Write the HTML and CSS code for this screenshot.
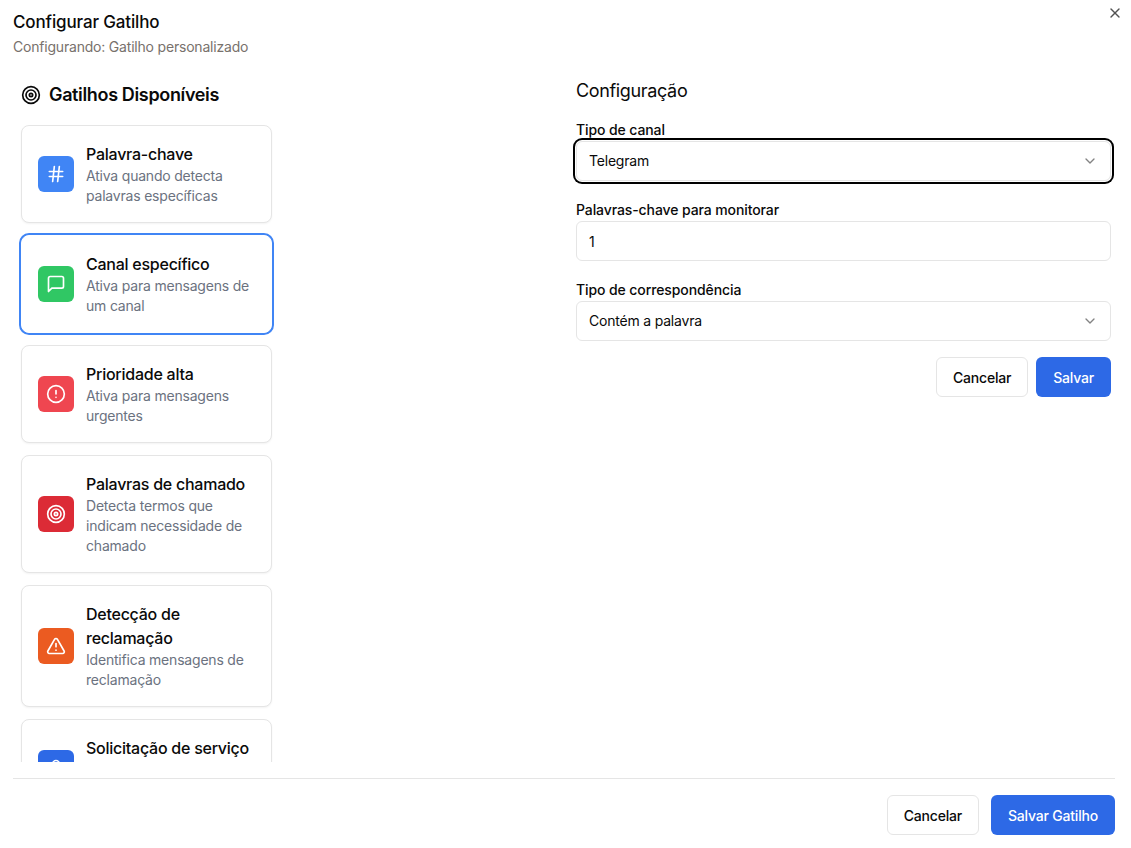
FILE: index.html
```html
<!DOCTYPE html>
<html lang="pt">
<head>
    <meta charset="utf-8">
    <title>Configurar Gatilho</title>
    <link rel="stylesheet" href="styles.css">
</head>
<body>
    <div class="dialog">
        <button class="close-btn" aria-label="Fechar">
            <svg viewBox="0 0 24 24" width="16" height="16" class="line-icon"><path d="M18 6 6 18"/><path d="m6 6 12 12"/></svg>
        </button>

        <header class="dialog-header">
            <h1>Configurar Gatilho</h1>
            <p>Configurando: Gatilho personalizado</p>
        </header>

        <div class="dialog-body">
            <section class="triggers">
                <h2>
                    <svg viewBox="0 0 24 24" width="20" height="20" class="line-icon"><circle cx="12" cy="12" r="10"/><circle cx="12" cy="12" r="6"/><circle cx="12" cy="12" r="2"/></svg>
                    Gatilhos Disponíveis
                </h2>
                <div class="trigger-list">
                    <div class="trigger-card">
                        <span class="trigger-icon bg-blue">
                            <svg viewBox="0 0 24 24" width="20" height="20" class="line-icon"><line x1="4" x2="20" y1="9" y2="9"/><line x1="4" x2="20" y1="15" y2="15"/><line x1="10" x2="8" y1="3" y2="21"/><line x1="16" x2="14" y1="3" y2="21"/></svg>
                        </span>
                        <div class="trigger-text">
                            <h3>Palavra-chave</h3>
                            <p>Ativa quando detecta palavras específicas</p>
                        </div>
                    </div>
                    <div class="trigger-card selected">
                        <span class="trigger-icon bg-green">
                            <svg viewBox="0 0 24 24" width="20" height="20" class="line-icon"><path d="M21 15a2 2 0 0 1-2 2H7l-4 4V5a2 2 0 0 1 2-2h14a2 2 0 0 1 2 2z"/></svg>
                        </span>
                        <div class="trigger-text">
                            <h3>Canal específico</h3>
                            <p>Ativa para mensagens de um canal</p>
                        </div>
                    </div>
                    <div class="trigger-card">
                        <span class="trigger-icon bg-red">
                            <svg viewBox="0 0 24 24" width="20" height="20" class="line-icon"><circle cx="12" cy="12" r="10"/><line x1="12" x2="12" y1="8" y2="12"/><line x1="12" x2="12.01" y1="16" y2="16"/></svg>
                        </span>
                        <div class="trigger-text">
                            <h3>Prioridade alta</h3>
                            <p>Ativa para mensagens urgentes</p>
                        </div>
                    </div>
                    <div class="trigger-card">
                        <span class="trigger-icon bg-darkred">
                            <svg viewBox="0 0 24 24" width="20" height="20" class="line-icon"><circle cx="12" cy="12" r="10"/><circle cx="12" cy="12" r="6"/><circle cx="12" cy="12" r="2"/></svg>
                        </span>
                        <div class="trigger-text">
                            <h3>Palavras de chamado</h3>
                            <p>Detecta termos que indicam necessidade de chamado</p>
                        </div>
                    </div>
                    <div class="trigger-card">
                        <span class="trigger-icon bg-orange">
                            <svg viewBox="0 0 24 24" width="20" height="20" class="line-icon"><path d="m21.73 18-8-14a2 2 0 0 0-3.48 0l-8 14A2 2 0 0 0 4 21h16a2 2 0 0 0 1.73-3"/><path d="M12 9v4"/><path d="M12 17h.01"/></svg>
                        </span>
                        <div class="trigger-text">
                            <h3>Detecção de reclamação</h3>
                            <p>Identifica mensagens de reclamação</p>
                        </div>
                    </div>
                    <div class="trigger-card">
                        <span class="trigger-icon bg-royal">
                            <svg viewBox="0 0 24 24" width="20" height="20" class="line-icon"><path d="M19 21v-2a4 4 0 0 0-4-4H9a4 4 0 0 0-4 4v2"/><circle cx="12" cy="7" r="4"/></svg>
                        </span>
                        <div class="trigger-text">
                            <h3>Solicitação de serviço</h3>
                        </div>
                    </div>
                </div>
            </section>

            <section class="config">
                <h2>Configuração</h2>
                <div class="field">
                    <label>Tipo de canal</label>
                    <div class="control select focused">
                        <span>Telegram</span>
                        <svg viewBox="0 0 24 24" width="16" height="16" class="line-icon chevron"><path d="m6 9 6 6 6-6"/></svg>
                    </div>
                </div>
                <div class="field">
                    <label>Palavras-chave para monitorar</label>
                    <div class="control"><span>1</span></div>
                </div>
                <div class="field">
                    <label>Tipo de correspondência</label>
                    <div class="control select">
                        <span>Contém a palavra</span>
                        <svg viewBox="0 0 24 24" width="16" height="16" class="line-icon chevron"><path d="m6 9 6 6 6-6"/></svg>
                    </div>
                </div>
                <div class="config-actions">
                    <button class="btn btn-outline">Cancelar</button>
                    <button class="btn btn-primary">Salvar</button>
                </div>
            </section>
        </div>

        <footer class="dialog-footer">
            <button class="btn btn-outline">Cancelar</button>
            <button class="btn btn-primary">Salvar Gatilho</button>
        </footer>
    </div>
</body>
</html>
```

FILE: styles.css
```css
* {
    box-sizing: border-box;
}
html, body {
    margin: 0;
    height: 100%;
}
body {
    font-family: Inter, "Liberation Sans", sans-serif;
    background-color: #fff;
    color: #0a0a0a;
    letter-spacing: -0.2px;
    overflow: hidden;
}
.line-icon {
    fill: none;
    stroke: currentColor;
    stroke-width: 2;
    stroke-linecap: round;
    stroke-linejoin: round;
    flex-shrink: 0;
}
.dialog {
    position: relative;
    height: 848px;
    padding: 13px 16px 13px 13px;
    display: flex;
    flex-direction: column;
}
.close-btn {
    position: absolute;
    top: 5px;
    right: 8px;
    padding: 0;
    border: none;
    background: none;
    color: #525252;
    display: flex;
}
.dialog-header h1 {
    margin: 0;
    font-size: 17px;
    line-height: 18px;
    font-weight: 500;
    letter-spacing: -0.14px;
}
.dialog-header p {
    margin: 6px 0 0;
    font-size: 14px;
    line-height: 20px;
    color: #78716c;
}
.dialog-body {
    display: grid;
    grid-template-columns: 1fr 1fr;
    column-gap: 24px;
    margin-top: 20px;
    height: 701px;
}
.triggers {
    padding: 0 8px;
    min-height: 0;
    display: flex;
    flex-direction: column;
}
.triggers h2 {
    margin: 4px 0 0;
    display: flex;
    align-items: center;
    gap: 8px;
    font-size: 18px;
    line-height: 28px;
    font-weight: 600;
    letter-spacing: -0.35px;
}
.trigger-list {
    margin-top: 16px;
    height: 637px;
    overflow: hidden;
    padding: 0 0 0 2px;
    margin-left: -2px;
    display: flex;
    flex-direction: column;
    gap: 12px;
}
.trigger-card {
    width: 251px;
    flex-shrink: 0;
    display: flex;
    align-items: center;
    gap: 12px;
    padding: 16px;
    border: 1px solid #e5e5e5;
    border-radius: 8px;
    background-color: #fff;
    box-shadow: 0 1px 2px rgba(0, 0, 0, 0.05);
}
.trigger-card.selected {
    border-color: #fff;
    box-shadow: 0 0 0 2px #4085f5;
}
.trigger-icon {
    width: 36px;
    height: 36px;
    flex-shrink: 0;
    border-radius: 6px;
    color: #fff;
    display: flex;
    align-items: center;
    justify-content: center;
}
.bg-blue { background-color: #4085f5; }
.bg-green { background-color: #30c764; }
.bg-red { background-color: #ef4650; }
.bg-darkred { background-color: #dc2b36; }
.bg-orange { background-color: #eb5b21; }
.bg-royal { background-color: #2d69e6; }
.trigger-text {
    min-height: 64px;
}
.trigger-text h3 {
    margin: 0;
    font-size: 16px;
    line-height: 24px;
    font-weight: 450;
    letter-spacing: -0.25px;
}
.trigger-text p {
    margin: 0;
    font-size: 14px;
    line-height: 20px;
    color: #6b7280;
}
.config {
    padding-right: 4px;
}
.config h2 {
    margin: 0 0 18px;
    font-size: 18px;
    line-height: 28px;
    font-weight: 400;
    letter-spacing: -0.35px;
}
.field + .field {
    margin-top: 22px;
}
.field label {
    display: block;
    font-size: 14px;
    line-height: 14px;
    font-weight: 450;
    letter-spacing: -0.1px;
    margin-bottom: 4px;
}
.control {
    height: 40px;
    padding: 0 12px;
    border: 1px solid #e5e5e5;
    border-radius: 6px;
    background-color: #fff;
    font-size: 14px;
    display: flex;
    align-items: center;
    justify-content: space-between;
}
.select span {
    margin-top: -2px;
}
.control.focused {
    box-shadow: 0 0 0 1px #fff, 0 0 0 3px #000;
}
.chevron {
    opacity: 0.5;
}
.config-actions {
    margin-top: 16px;
    display: flex;
    justify-content: flex-end;
    gap: 8px;
}
.btn {
    height: 40px;
    padding: 0 16px;
    border-radius: 6px;
    font-family: inherit;
    font-size: 14px;
    font-weight: 450;
    letter-spacing: -0.2px;
    border: 1px solid transparent;
}
.btn-outline {
    background-color: #fff;
    border-color: #e5e5e5;
    color: #0a0a0a;
}
.btn-primary {
    background-color: #2d69e6;
    color: #fff;
}
.dialog-footer {
    border-top: 1px solid #e5e5e5;
    padding-top: 16px;
    display: flex;
    justify-content: flex-end;
    gap: 12px;
}
```
